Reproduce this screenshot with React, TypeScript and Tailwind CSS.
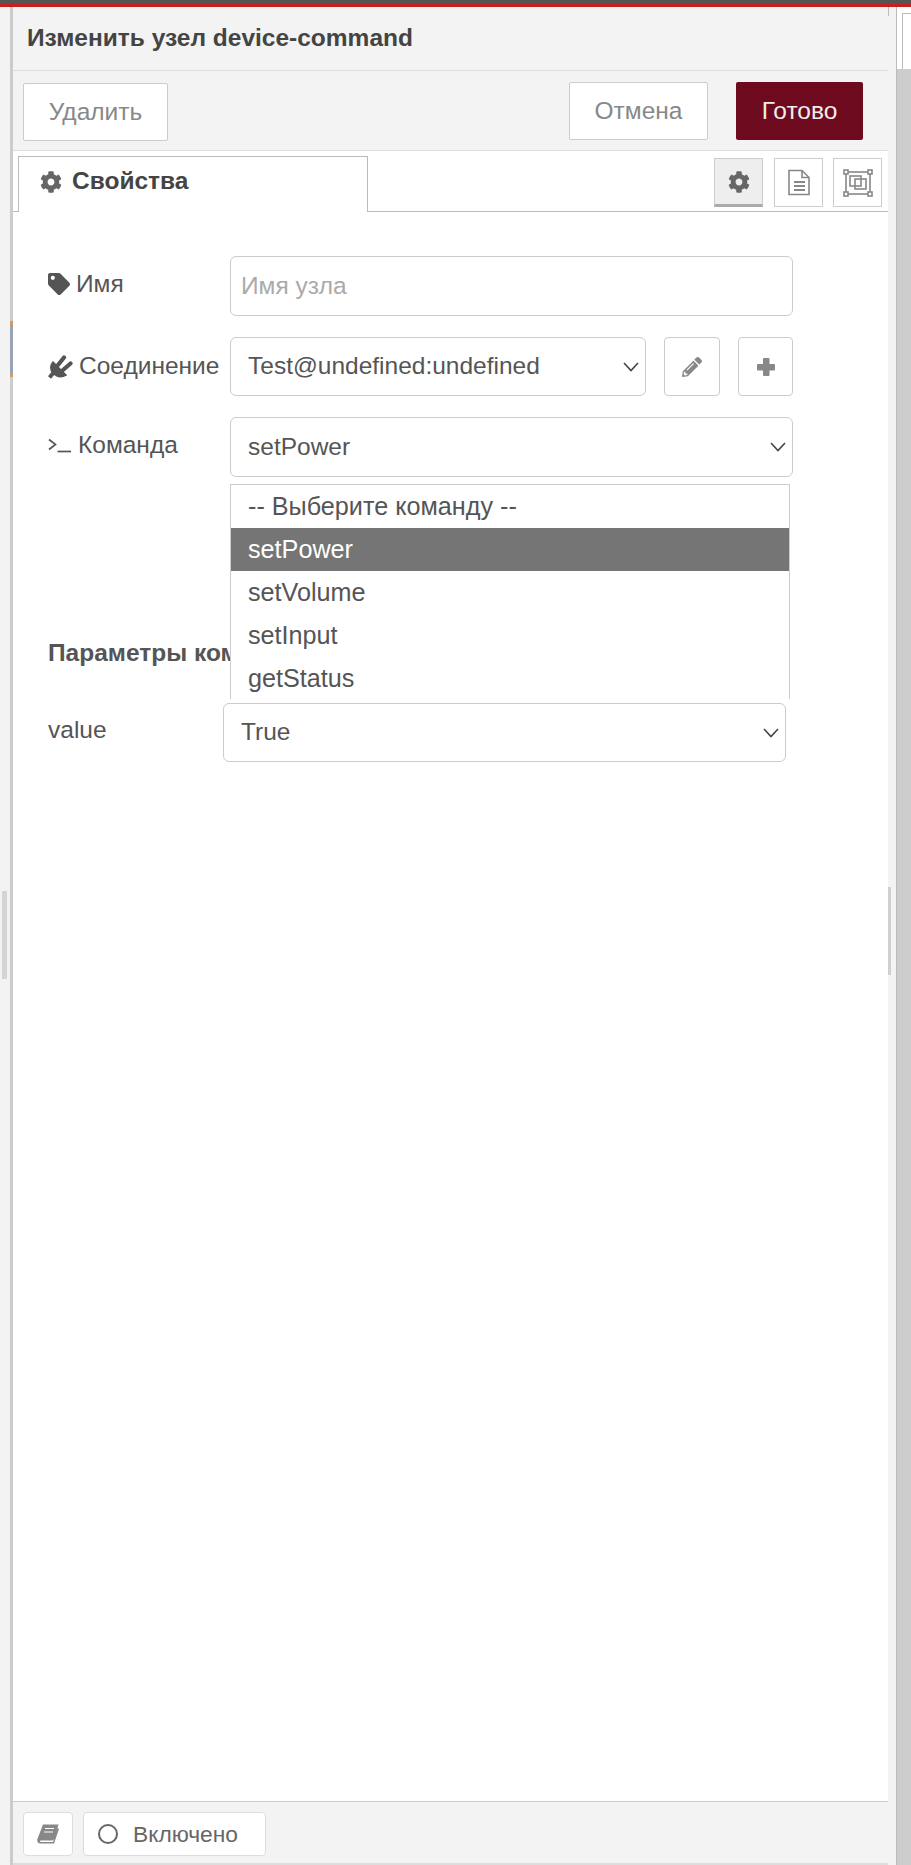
import React from 'react';
import { FaCog, FaTag, FaPencilAlt } from 'react-icons/fa';

const font = { fontFamily: '"Liberation Sans", Arial, sans-serif' };

const Chevron = () => (
    <svg width="16" height="10" viewBox="0 0 16 10" fill="none" stroke="#444" strokeWidth="1.6" className="shrink-0">
        <path d="M1 1 L8 8.5 L15 1" />
    </svg>
);

const SelectBox = ({ value, className }: { value: string; className: string }) => (
    <div className={`flex items-center justify-between bg-white border border-[#ccc] rounded-[6px] pl-[17px] pr-[6px] text-[24.5px] text-[#555] ${className}`}>
        <span>{value}</span>
        <Chevron />
    </div>
);

const PlugIcon = () => (
    <svg width="25" height="24" viewBox="0 0 25 24" fill="#555" stroke="#555">
        <path strokeWidth="1.5" d="M5 7 L18 20 C13 23 8 21 5 18 C2 15 2 10 5 7 Z" />
        <path fill="none" strokeWidth="4" d="M6 17 L1.5 22.5" />
        <path fill="none" strokeWidth="4.2" strokeLinecap="round" d="M10 10 L16 2.5 M15 15 L22.5 8.5" />
    </svg>
);

const FileIcon = () => (
    <svg width="24" height="27" viewBox="0 0 24 27" fill="none" stroke="#888" strokeWidth="1.6">
        <path d="M2 1.5 H15 L22 8.5 V25.5 H2 Z" />
        <path d="M15 1.5 V8.5 H22" />
        <path d="M7 13 H18 M7 17 H18 M7 21 H18" strokeWidth="1.8" />
    </svg>
);

const FlowIcon = () => (
    <svg width="30" height="28" viewBox="0 0 30 28" fill="none" stroke="#888" strokeWidth="1.6">
        <rect x="3" y="3" width="24" height="22" />
        <rect x="1" y="1" width="4" height="4" fill="#fff" />
        <rect x="25" y="1" width="4" height="4" fill="#fff" />
        <rect x="1" y="23" width="4" height="4" fill="#fff" />
        <rect x="25" y="23" width="4" height="4" fill="#fff" />
        <rect x="7" y="7" width="11" height="10" />
        <rect x="12" y="10" width="11" height="10" />
    </svg>
);

const TerminalIcon = () => (
    <svg width="24" height="16" viewBox="0 0 24 16" fill="none" stroke="#555" strokeWidth="1.7">
        <path d="M1 2.5 L7.5 7.5 L1 12.5" />
        <path d="M9.5 14.5 H23" />
    </svg>
);

const PlusIcon = () => (
    <svg width="20" height="20" viewBox="0 0 20 20" fill="#888">
        <rect x="7" y="1" width="6.5" height="18" rx="1" />
        <rect x="1" y="7" width="18" height="6.5" rx="1" />
    </svg>
);

const BookIcon = () => (
    <svg width="22" height="20" viewBox="0 0 22 20">
        <path fill="#888" d="M6 0.5 H21.5 L17 15 Q16.5 16.5 14 16.5 H3.5 Q2 17.5 4 18 H16 L20.5 4 L22 5 L17 19.5 H3.5 Q0 19.5 0.2 15.5 Z" />
        <path stroke="#fff" strokeWidth="1.2" d="M8 4.5 H17 M7 8 H16" />
    </svg>
);

export default function App() {
    const options = ['-- Выберите команду --', 'setPower', 'setVolume', 'setInput', 'getStatus'];

    return (
        <div className="w-[911px] h-[1865px] flex flex-col overflow-hidden bg-[#f3f3f3]" style={font}>
            {/* top bars */}
            <div className="h-[4px] shrink-0 bg-[#555]"></div>
            <div className="h-[3px] shrink-0 bg-[#c81e1e]"></div>

            <div className="flex-1 flex min-h-0">
                {/* left strip */}
                <div className="w-[10px] shrink-0 relative">
                    <div className="absolute left-[2px] top-[884px] w-[5px] h-[88px] bg-[#d4d4d4]"></div>
                </div>
                <div className="w-[3px] shrink-0 bg-[#ccc] flex flex-col">
                    <div className="h-[314px]"></div>
                    <div className="h-[4px] bg-[#d89a5c]"></div>
                    <div className="h-[48px] bg-[#98a4b0]"></div>
                    <div className="h-[4px] bg-[#d89a5c]"></div>
                </div>

                {/* edit panel */}
                <div className="w-[875px] shrink-0 flex flex-col bg-white">
                    <div className="h-[64px] shrink-0 flex items-center pl-[14px] bg-[#f3f3f3] border-b border-[#ddd] text-[24.5px] font-bold text-[#444]">
                        Изменить узел device-command
                    </div>
                    <div className="h-[80px] shrink-0 flex items-start pt-[11px] pl-[10px] pr-[25px] bg-[#f3f3f3] border-b border-[#ddd]">
                        <button className="w-[145px] h-[58px] mt-[1px] bg-white border border-[#ccc] rounded-[2px] text-[24.5px] text-[#888]">Удалить</button>
                        <button className="w-[139px] h-[58px] ml-auto bg-white border border-[#ccc] rounded-[2px] text-[24.5px] text-[#888]">Отмена</button>
                        <button className="w-[127px] h-[58px] ml-[28px] bg-[#6e0a1e] rounded-[2px] text-[24.5px] text-[#eee]">Готово</button>
                    </div>

                    {/* tabs */}
                    <div className="h-[61px] shrink-0 flex items-end pl-[5px] pr-[6px] border-b border-[#bbb] bg-white">
                        <div className="w-[350px] h-[56px] -mb-px flex items-center gap-[10px] pl-[21px] pb-[6px] bg-white border border-b-0 border-[#bbb] text-[24.5px] font-bold text-[#444]">
                            <FaCog size={22} className="text-[#666]" />
                            <span>Свойства</span>
                        </div>
                        <div className="ml-auto flex items-start self-start pt-[7px]">
                            <div className="w-[49px] h-[49px] flex items-center justify-center bg-[#eee] border border-[#ccc] border-b-[3px] border-b-[#aaa]">
                                <FaCog size={22} className="text-[#666]" />
                            </div>
                            <div className="w-[49px] h-[49px] ml-[11px] flex items-center justify-center bg-white border border-[#ccc]">
                                <FileIcon />
                            </div>
                            <div className="w-[49px] h-[49px] ml-[10px] flex items-center justify-center bg-white border border-[#ccc]">
                                <FlowIcon />
                            </div>
                        </div>
                    </div>

                    {/* form */}
                    <div className="flex-1 flex flex-col pt-[44px] pl-[35px] text-[24.5px] text-[#555]">
                        <div className="flex items-center h-[60px]">
                            <div className="w-[182px] flex items-center gap-[6px] -mt-[4px]">
                                <FaTag size={22} className="text-[#555]" />
                                <span>Имя</span>
                            </div>
                            <input
                                placeholder="Имя узла"
                                className="w-[563px] h-[60px] bg-white border border-[#ccc] rounded-[6px] px-[10px] text-[24.5px] placeholder:text-[#aaa] outline-none"
                            />
                        </div>

                        <div className="flex items-center h-[59px] mt-[21px]">
                            <div className="w-[182px] flex items-center gap-[6px]">
                                <PlugIcon />
                                <span>Соединение</span>
                            </div>
                            <SelectBox value="Test@undefined:undefined" className="w-[416px] h-[59px]" />
                            <button className="w-[56px] h-[59px] ml-[18px] flex items-center justify-center bg-white border border-[#ccc] rounded-[4px]">
                                <FaPencilAlt size={20} className="text-[#888]" />
                            </button>
                            <button className="w-[55px] h-[59px] ml-[18px] flex items-center justify-center bg-white border border-[#ccc] rounded-[4px]">
                                <PlusIcon />
                            </button>
                        </div>

                        <div className="relative flex items-center h-[60px] mt-[21px]">
                            <div className="w-[182px] flex items-center gap-[6px] -mt-[4px]">
                                <TerminalIcon />
                                <span>Команда</span>
                            </div>
                            <SelectBox value="setPower" className="w-[563px] h-[60px]" />
                            <div className="absolute z-10 left-[182px] top-[67px] w-[560px] h-[215px] overflow-hidden bg-white border border-b-0 border-[#ccc] text-[25.2px]">
                                {options.map(o => (
                                    <div key={o} className={`h-[43px] flex items-center pl-[17px] pt-[1px] ${o === 'setPower' ? 'bg-[#757575] text-white' : 'text-[#555]'}`}>
                                        {o}
                                    </div>
                                ))}
                            </div>
                        </div>

                        <div className="mt-[162px] font-bold whitespace-nowrap leading-[28px]">Параметры команды</div>

                        <div className="flex items-center h-[59px] mt-[36px]">
                            <div className="w-[175px] -mt-[4px]">value</div>
                            <SelectBox value="True" className="w-[563px] h-[59px]" />
                        </div>
                    </div>

                    {/* footer */}
                    <div className="h-[64px] shrink-0 flex items-start gap-[10px] pt-[10px] pl-[10px] bg-[#f3f3f3] border-t border-[#ccc] border-b-2 border-b-[#ddd]">
                        <button className="w-[50px] h-[44px] flex items-center justify-center bg-white border border-[#ddd] rounded-[4px]">
                            <BookIcon />
                        </button>
                        <button className="w-[183px] h-[44px] flex items-center gap-[15px] pl-[14px] bg-white border border-[#ddd] rounded-[4px] text-[22.75px] text-[#666]">
                            <span className="w-[20px] h-[20px] rounded-full border-2 border-[#666]"></span>
                            <span>Включено</span>
                        </button>
                    </div>
                </div>

                {/* gutter */}
                <div className="w-[8px] shrink-0 relative bg-[#f3f3f3]">
                    <div className="absolute left-0 top-0 w-px h-[9px] bg-[#bbb]"></div>
                    <div className="absolute left-0 top-[880px] w-[3px] h-[88px] bg-[#d0d0d0]"></div>
                </div>

                {/* sidebar edge */}
                <div className="flex-1 flex flex-col border-l border-[#bbb] bg-[#ccc]">
                    <div className="h-[62px] pl-[5px] pt-[6px] bg-white">
                        <div className="h-full bg-white border-l border-t border-[#bbb]"></div>
                    </div>
                </div>
            </div>
        </div>
    );
}
